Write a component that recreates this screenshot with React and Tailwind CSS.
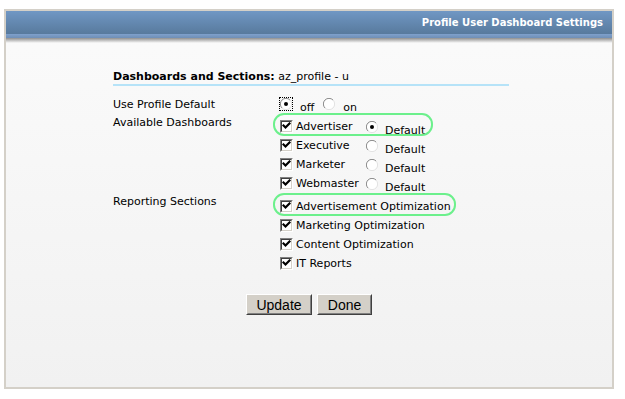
import React from 'react'

const font = { fontFamily: '"DejaVu Sans", Verdana, sans-serif' }

function Check() {
  return (
    <span className="inline-block w-[13px] h-[13px] shrink-0 border border-t-[#808080] border-l-[#808080] border-r-white border-b-white">
      <span className="block w-[11px] h-[11px] border border-t-[#404040] border-l-[#404040] border-r-[#d4d0c8] border-b-[#d4d0c8] bg-white">
        <svg width="9" height="9" viewBox="0 0 9 9" className="block">
          <path d="M1.5 3.5 L3.5 5.5 L7.5 1.5" stroke="#000" strokeWidth="2.2" fill="none" strokeLinecap="square" />
        </svg>
      </span>
    </span>
  )
}

function Radio({ on, focus }) {
  return (
    <span className={'inline-flex shrink-0 items-center justify-center ' + (focus ? 'w-[14px] h-[14px] -m-px border border-dotted border-black' : 'w-[12px] h-[12px]')}>
      <svg width="12" height="12" viewBox="0 0 12 12" className="block">
        <circle cx="6" cy="6" r="5.5" fill="#fff" />
        <path d="M10 2 A5.5 5.5 0 0 0 2 10" stroke="#8a8a8a" strokeWidth="1" fill="none" />
        <path d="M2 10 A5.5 5.5 0 0 0 10 2" stroke="#e2e2e2" strokeWidth="1" fill="none" />
        {on && <circle cx="6" cy="6" r="2" fill="#000" />}
      </svg>
    </span>
  )
}

function Highlight({ w }) {
  return (
    <div
      className="absolute top-[-4px] left-[-7px] h-[23px] border-2 border-[#6cf08c] rounded-[11px] pointer-events-none"
      style={{ width: w }}
    />
  )
}

const dashboards = [
  { name: 'Advertiser', on: true, hl: true },
  { name: 'Executive' },
  { name: 'Marketer' },
  { name: 'Webmaster' },
]

const sections = [
  { name: 'Advertisement Optimization', hl: true },
  { name: 'Marketing Optimization' },
  { name: 'Content Optimization' },
  { name: 'IT Reports' },
]

export default function App() {
  return (
    <div className="w-[625px] h-[399px] bg-white pt-[9px] pl-[4px] text-[11px] text-black" style={font}>
      <div className="w-[610px] h-[380px] border-2 border-[#d4d0c8] flex flex-col bg-gradient-to-b from-[#fbfbfb] to-[#f1f1f1]">
        {/* header */}
        <div className="h-[23px] bg-gradient-to-b from-[#7097c4] to-[#587a9d] flex items-center justify-end pr-[9px]">
          <span className="font-bold text-white text-[10px] leading-none">Profile User Dashboard Settings</span>
        </div>
        <div className="h-[4px] bg-gradient-to-b from-[#7fa1cc] to-[#6f8fb6]" />
        <div className="h-[5px] bg-gradient-to-b from-[#8f8f8f] to-[#fbfbfb]" />

        <div className="pl-[107px] pt-[27px]">
          <div className="leading-[14px] h-[14px]">
            <span className="font-bold">Dashboards and Sections:</span> az_profile - u
          </div>
          <div className="w-[396px] h-[2px] bg-[#b6e3f8]" />

          {/* use profile default */}
          <div className="flex mt-[12px] h-[19px]">
            <div className="w-[167px] leading-[13px]">Use Profile Default</div>
            <div className="flex items-start">
              <Radio on focus />
              <span className="ml-[8px] mt-[3px] leading-[14px]">off</span>
              <span className="ml-[9px]"><Radio /></span>
              <span className="ml-[8px] mt-[3px] leading-[14px]">on</span>
            </div>
          </div>

          {/* dashboards */}
          <div className="flex">
            <div className="w-[167px] leading-[13px] -mt-px">Available Dashboards</div>
            <div>
              {dashboards.map((d) => (
                <div key={d.name} className="relative flex items-center h-[19px]">
                  {d.hl && <Highlight w={160} />}
                  <div className="w-[86px] flex items-center">
                    <Check />
                    <span className="ml-[3px] leading-[13px]">{d.name}</span>
                  </div>
                  <Radio on={d.on} />
                  <span className="ml-[7px] mt-[8px] leading-[13px]">Default</span>
                </div>
              ))}
            </div>
          </div>

          {/* reporting sections */}
          <div className="flex mt-[4px]">
            <div className="w-[167px] leading-[13px] -mt-[2px]">Reporting Sections</div>
            <div>
              {sections.map((s) => (
                <div key={s.name} className="relative flex items-center h-[19px]">
                  {s.hl && <Highlight w={183} />}
                  <Check />
                  <span className="ml-[3px] leading-[13px]">{s.name}</span>
                </div>
              ))}
            </div>
          </div>
        </div>

        <div className="flex justify-center gap-[5px] mt-[21px]" style={{ fontFamily: '"Liberation Sans", Arial, sans-serif' }}>
          {['Update', 'Done'].map((b, i) => (
            <button
              key={b}
              className={'h-[21px] text-[14px] leading-none bg-[#d4d0c8] border border-t-white border-l-white border-r-[#404040] border-b-[#404040] ' + (i === 0 ? 'w-[66px]' : 'w-[55px]')}
            >
              <span className="flex items-center justify-center h-full border border-t-[#d4d0c8] border-l-[#d4d0c8] border-r-[#808080] border-b-[#808080]">
                {b}
              </span>
            </button>
          ))}
        </div>
      </div>
    </div>
  )
}
